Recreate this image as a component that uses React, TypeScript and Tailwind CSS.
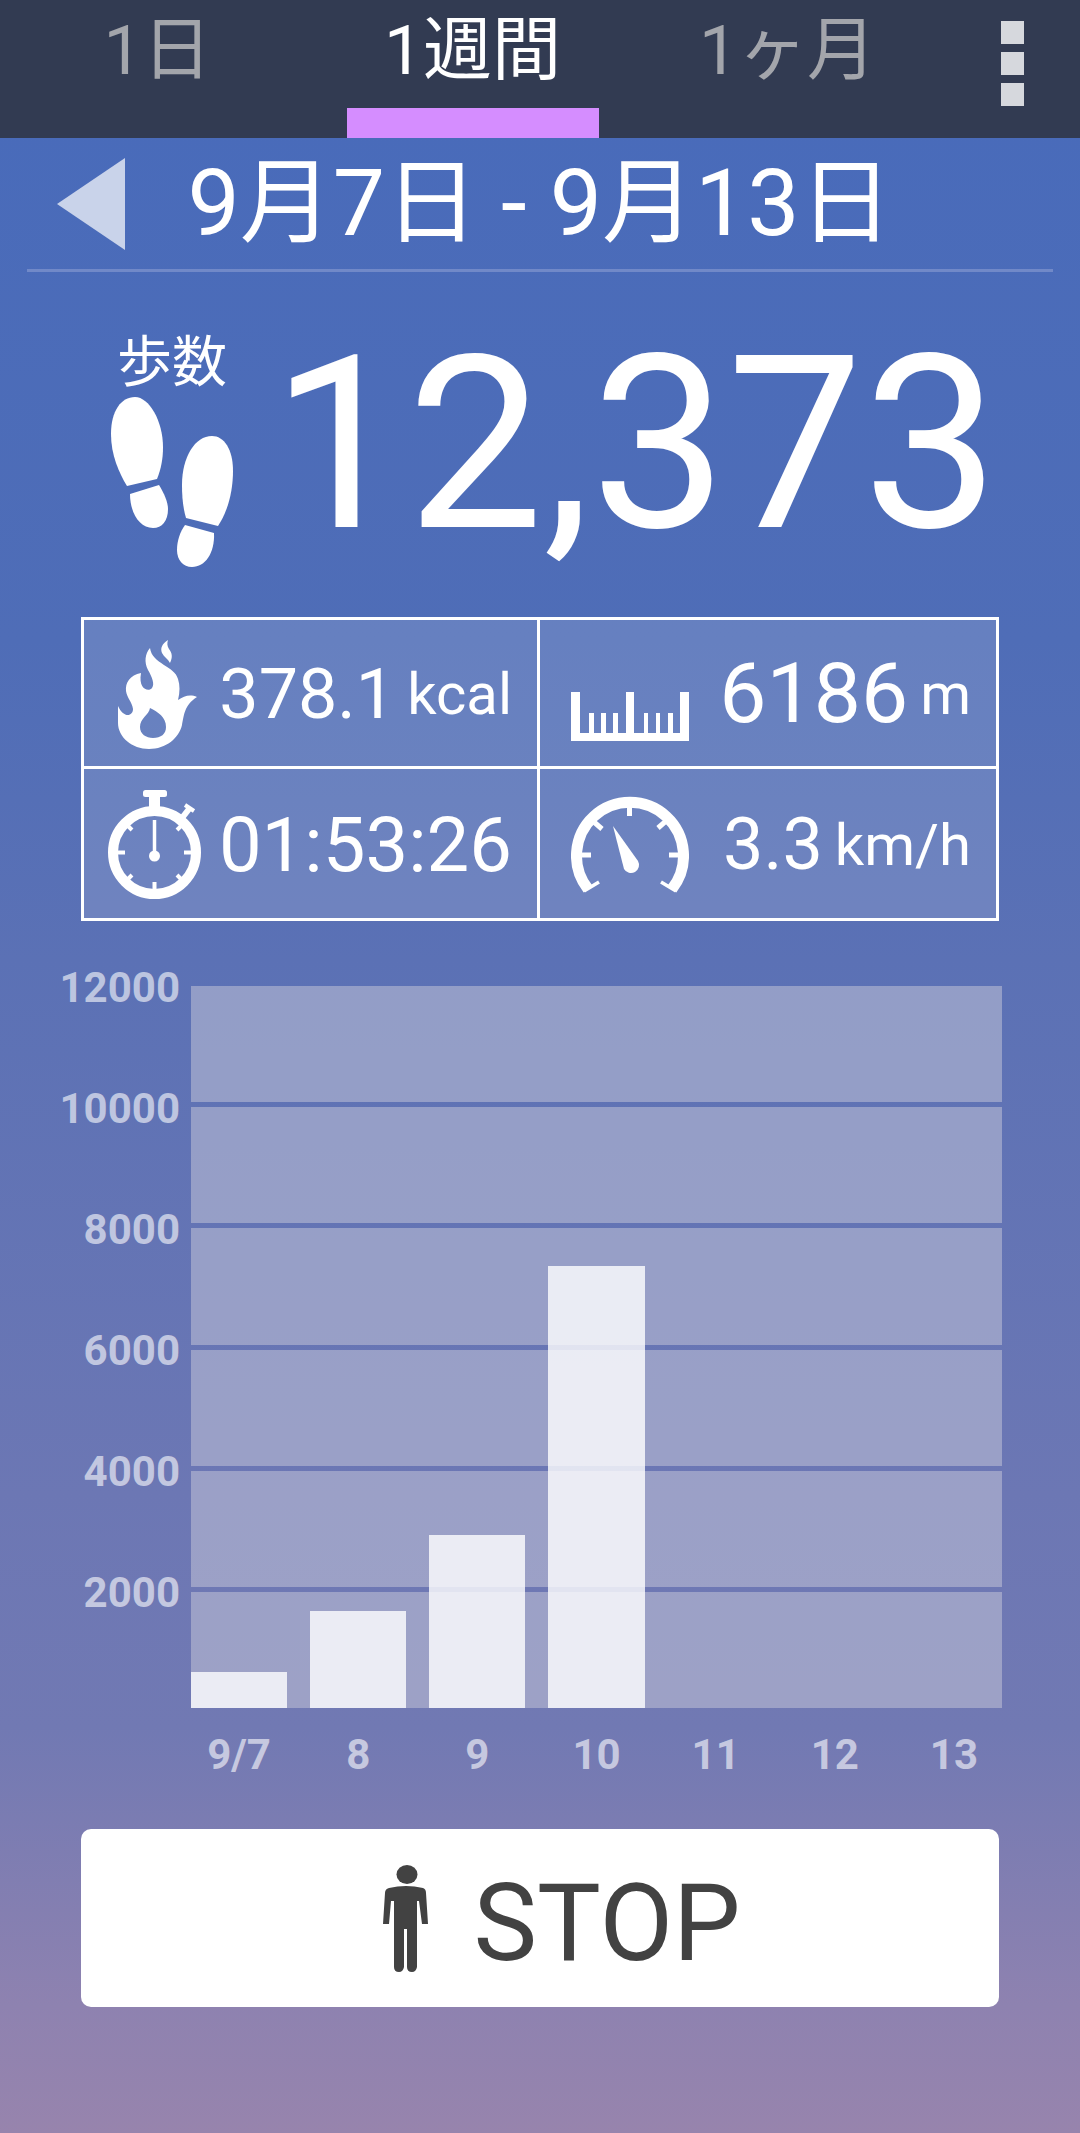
import { ReactNode, useState } from 'react';

const TABS = ['1日', '1週間', '1ヶ月'];

const DAYS = [
  { label: '9/7', steps: 600 },
  { label: '8', steps: 1610 },
  { label: '9', steps: 2860 },
  { label: '10', steps: 7303 },
  { label: '11', steps: 0 },
  { label: '12', steps: 0 },
  { label: '13', steps: 0 }
];

const AXIS_LABELS = [12000, 10000, 8000, 6000, 4000, 2000];

// Step count at the upper edge of the plot area
const PLOT_TOP = 11930;

const FootprintsIcon = () => (
  <svg className="h-[170px] w-[122px]" viewBox="0 0 122 170" fill="currentColor" aria-hidden="true">
    <path d="M24 0C10 0 0 14 0 37C0 58 8 76 16 89L46 82C50 72 52 62 52 50C52 24 38 0 24 0Z" />
    <path d="M19 97L48 88C53 96 57 105 57 112C57 124 51 131 42 131C28 131 19 115 19 97Z" />
    <path d="M101 39C84 39 71 60 71 88C71 100 72 111 75 121L107 129C117 114 122 94 122 74C122 52 113 39 101 39Z" />
    <path d="M74 128L103 136C104 156 94 170 81 170C72 170 66 163 66 153C66 144 69 135 74 128Z" />
  </svg>
);

const FlameIcon = () => (
  <svg className="h-[109px] w-[79px]" viewBox="0 0 79 109" fill="currentColor" aria-hidden="true">
    <path d="M50 0C44 4 42 8 44 13C46 17 50 19 52 23C55 17 54 13 51 9C49 6 49 3 50 0Z" />
    <path
      fillRule="evenodd"
      d="M32 8C27 14 26 22 30 30C34 37 37 44 34 48C31 52 20 50 23 33C12 35 7 43 8 51C9 58 14 62 15 69C15 76 6 79 0 66V83C0 97 14 109 31 109C48 109 61 98 64 85C66 76 66 65 79 57C72 54 66 56 60 60C62 52 62 45 60 39C57 26 34 24 32 8ZM32 68C31 75 22 78 22 87C22 94 28 98 35 98C43 98 48 94 48 87C48 77 40 72 32 68Z"
    />
  </svg>
);

const StopwatchIcon = () => (
  <svg className="h-[109px] w-[93px]" viewBox="0 0 93 109" fill="none" stroke="currentColor" aria-hidden="true">
    <circle cx="46.5" cy="62.5" r="41.5" strokeWidth="10" />
    <rect x="35" y="0" width="24" height="7" rx="2.5" fill="currentColor" stroke="none" />
    <path d="M46.5 5V20" strokeWidth="11" />
    <path d="M77 15L86 21" strokeWidth="4" />
    <path d="M81 19L74 28" strokeWidth="6" />
    <path
      d="M9 62.5H17M84 62.5H76M46.5 100V92M18 34L24 40M75 34L69 40M18 91L24 85M75 91L69 85"
      strokeWidth="4"
    />
    <path d="M46.5 30V64" strokeWidth="3.5" />
    <circle cx="46.5" cy="66" r="5.5" fill="currentColor" stroke="none" />
  </svg>
);

const RulerIcon = () => (
  <svg className="mt-11 h-[49px] w-[118px]" viewBox="0 0 118 49" fill="currentColor" aria-hidden="true">
    <path d="M0 0H9V41H18V21H23V41H30V21H35V41H42V21H47V41H55V0H63V41H73V21H77V41H85V21H89V41H97V21H102V41H109V0H118V49H0Z" />
  </svg>
);

const GaugeIcon = () => (
  <svg className="h-[97px] w-[118px]" viewBox="0 0 118 97" fill="none" stroke="currentColor" aria-hidden="true">
    <path d="M17 93A53.5 53.5 0 1 1 101 93" strokeWidth="11" />
    <path d="M13 95L28 86M105 95L90 86" strokeWidth="3.5" />
    <path d="M10 59H20M108 59H98M58.5 9V20M23 26L31 33M95 25L87 32" strokeWidth="5" />
    <path d="M42 30L67 65A8 8 0 0 1 53 73Z" fill="currentColor" stroke="none" />
  </svg>
);

const PersonIcon = () => (
  <svg className="h-[107px] w-[45px]" viewBox="0 0 45 107" fill="currentColor" aria-hidden="true">
    <ellipse cx="24" cy="9.5" rx="10.5" ry="9.5" />
    <path d="M6 23Q23 19 40 23Q43 24 43 28L45 59H39L36 36H34V102Q33 107 29 107Q24 107 24 102V64H21V102Q20 107 16 107Q11 107 11 102V36H8L6 59H0L2 28Q2 24 6 23Z" />
  </svg>
);

interface StatCellProps {
  icon: ReactNode;
  value: string;
  valueSize: string;
  unit?: string;
  className: string;
}

const StatCell = ({ icon, value, valueSize, unit, className }: StatCellProps) => (
  <div className={`flex h-[149px] items-center justify-between border-white pt-0.5 pr-[25px] ${className}`}>
    {icon}
    <div className="flex items-center gap-3 leading-none">
      <span className={valueSize}>{value}</span>
      {unit && <span className="text-[58px]">{unit}</span>}
    </div>
  </div>
);

const StepsChart = () => (
  <div className="mt-[65px] pr-[78px] text-[42px] leading-[42px] font-bold text-white/60">
    <div className="flex">
      <div className="-mt-[19px] flex w-[191px] flex-col gap-[5px] pr-[11px] text-right">
        {AXIS_LABELS.map((value) => (
          <div key={value} className="h-[116px]">{value}</div>
        ))}
      </div>
      <div className="relative flex h-[722px] flex-1 flex-col gap-[5px]">
        {AXIS_LABELS.map((value) => (
          <div key={value} className="flex-1 bg-[#cacada]/50" />
        ))}
        <div className="absolute inset-0 grid grid-cols-7 items-end gap-[23px]">
          {DAYS.map((day) => (
            <div
              key={day.label}
              className="bg-white/80"
              style={{ height: `${(day.steps / PLOT_TOP) * 100}%` }}
            />
          ))}
        </div>
      </div>
    </div>
    <div className="mt-[26px] ml-[191px] grid grid-cols-7 gap-[23px] text-center">
      {DAYS.map((day) => (
        <span key={day.label}>{day.label}</span>
      ))}
    </div>
  </div>
);

const App = () => {
  const [activeTab, setActiveTab] = useState(1);

  return (
    <div className="min-h-screen bg-[linear-gradient(#496bba_6%,#4f6db7_30%,#5b71b5_45%,#6c77b4_70%,#7179b3_81%,#8e82b0_94%,#9784ad_100%)] font-['Roboto','Noto_Sans_CJK_JP',sans-serif] text-white">
      <header className="grid grid-cols-[7fr_7fr_7fr_3fr] bg-[#323b52]">
        {TABS.map((tab, index) => (
          <button
            key={tab}
            onClick={() => setActiveTab(index)}
            className={`flex cursor-pointer flex-col items-center text-[69px] ${
              index === activeTab ? 'text-white' : 'text-[#a3a5ab]'
            }`}
          >
            <span className="h-[108px] leading-[101px]">{tab}</span>
            <span className={`h-[30px] w-4/5 ${index === activeTab ? 'bg-[#d58dff]' : ''}`} />
          </button>
        ))}
        <button className="flex cursor-pointer flex-col items-center gap-2 pt-[21px]" aria-label="メニュー">
          <span className="size-[23px] bg-[#d6d8dd]" />
          <span className="size-[23px] bg-[#d6d8dd]" />
          <span className="size-[23px] bg-[#d6d8dd]" />
        </button>
      </header>

      <main className="pb-[126px]">
        <div className="mx-[27px] grid h-[134px] grid-cols-[68px_1fr_68px] items-center border-b-[3px] border-[#7189c8] px-[30px]">
          <button className="cursor-pointer text-[#c9d3ea]" aria-label="前の週">
            <svg className="h-[92px] w-[68px]" viewBox="0 0 68 92" fill="currentColor">
              <path d="M68 0V92L0 46Z" />
            </svg>
          </button>
          <h1 className="text-center text-[93px] leading-[131px]">9月7日 - 9月13日</h1>
        </div>

        <section className="mx-[81px] mt-[62px] flex items-start justify-between pl-[30px]">
          <div className="flex flex-col items-center gap-[7px]">
            <h2 className="text-[55px] leading-[56px]">歩数</h2>
            <FootprintsIcon />
          </div>
          <p className="text-[242px] leading-[220px]">12,373</p>
        </section>

        <section className="mx-[81px] mt-[50px] grid grid-cols-2 border-[3px] border-white bg-white/13">
          <StatCell
            icon={<FlameIcon />}
            value="378.1"
            valueSize="text-[70px]"
            unit="kcal"
            className="border-r-[3px] border-b-[3px] pl-[34px]"
          />
          <StatCell
            icon={<RulerIcon />}
            value="6186"
            valueSize="text-[84px]"
            unit="m"
            className="border-b-[3px] pl-[31px]"
          />
          <StatCell
            icon={<StopwatchIcon />}
            value="01:53:26"
            valueSize="text-[76px]"
            className="border-r-[3px] pl-6"
          />
          <StatCell
            icon={<GaugeIcon />}
            value="3.3"
            valueSize="text-[72px]"
            unit="km/h"
            className="pl-[31px]"
          />
        </section>

        <StepsChart />

        <div className="mx-[81px] mt-[53px]">
          <button className="flex h-[178px] w-full cursor-pointer items-center justify-center gap-[45px] rounded-[10px] bg-white pl-11 text-[107px] text-[#424242]">
            <PersonIcon />
            <span className="pt-[10px] leading-none">STOP</span>
          </button>
        </div>
      </main>
    </div>
  );
};

export default App;
